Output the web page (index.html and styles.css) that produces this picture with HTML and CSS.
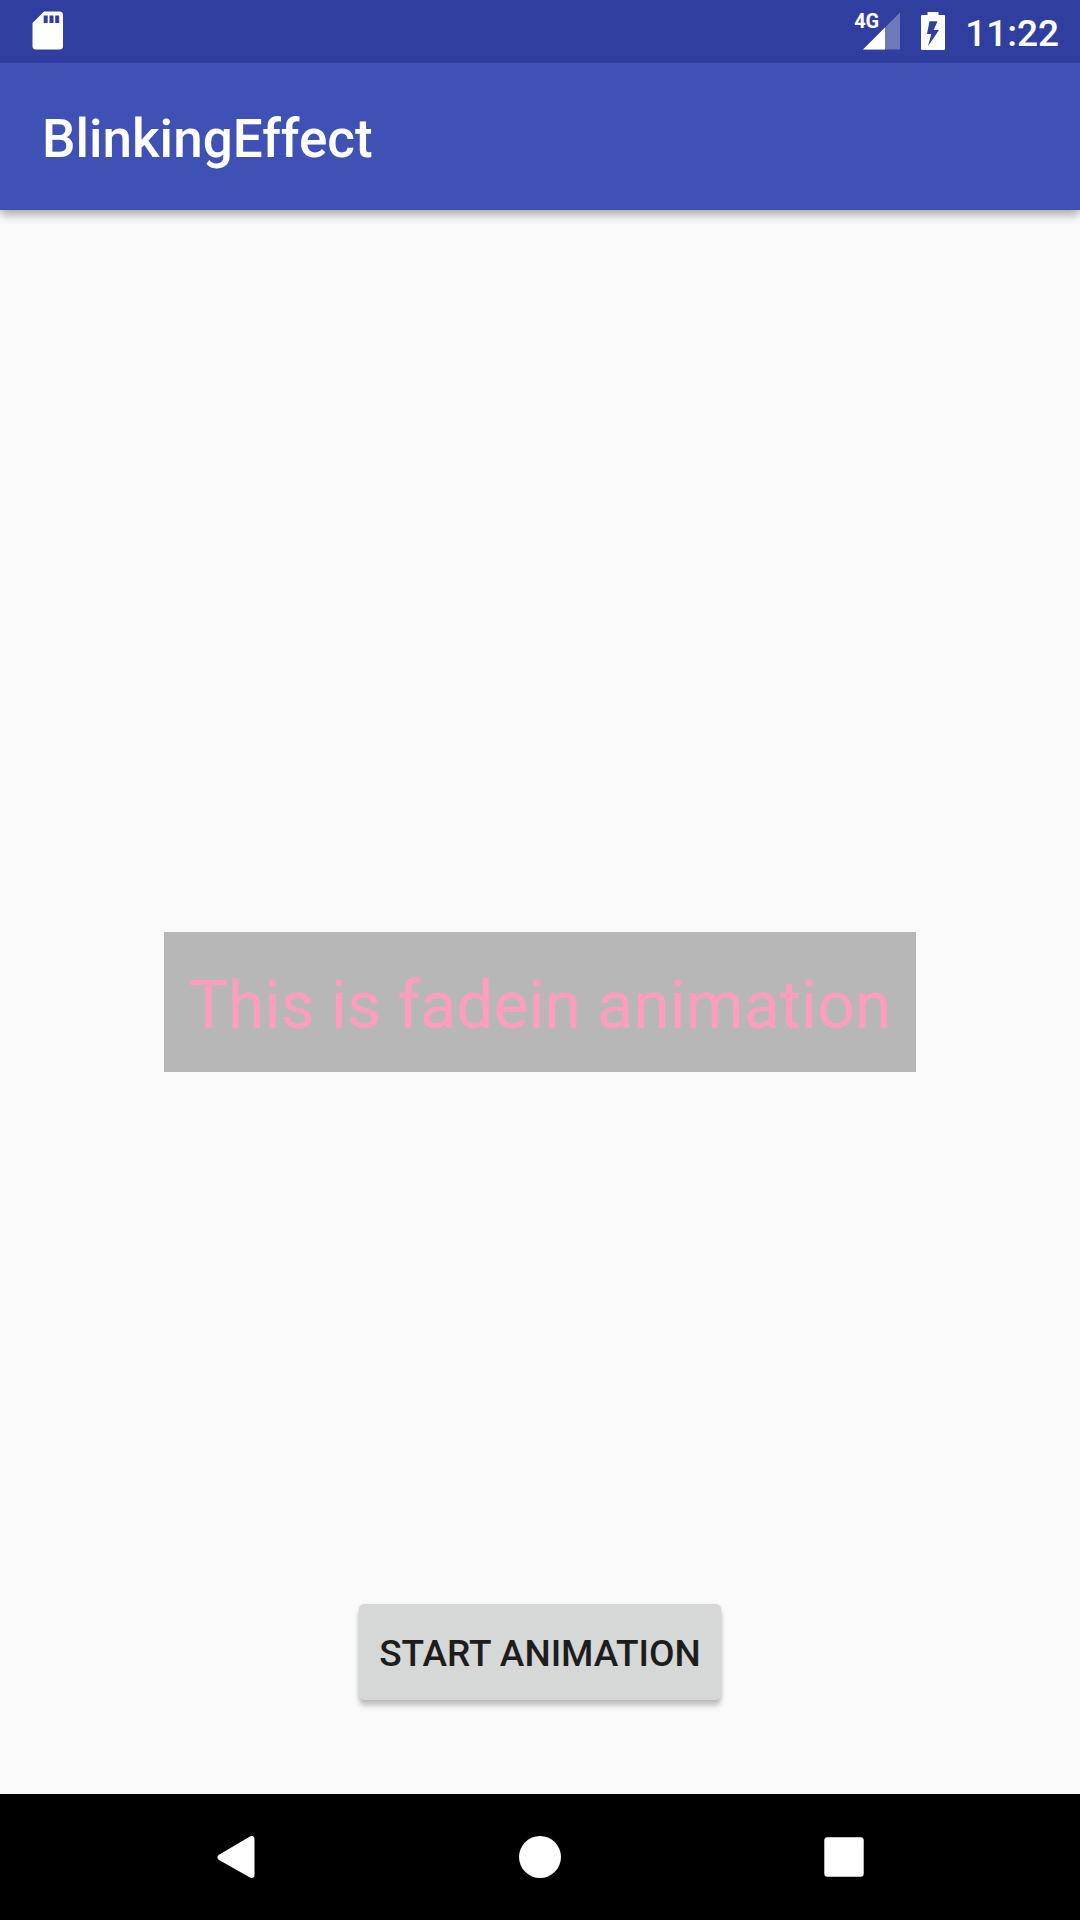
FILE: index.html
```html
<!DOCTYPE html>
<html lang="en">
<head>
<meta charset="utf-8">
<meta name="viewport" content="width=device-width, initial-scale=1">
<title>BlinkingEffect</title>
<link rel="stylesheet" href="styles.css">
</head>
<body class="screen">
  <div class="status-bar">
    <svg class="icon-sd" viewBox="0 0 32 40" aria-hidden="true">
      <path fill="#fff" fill-rule="evenodd" d="M12 .5h15.500a3.500 3.500 0 0 1 3.500 3.500v31a3.500 3.500 0 0 1-3.500 3.500H4a3.500 3.500 0 0 1-3.500-3.500V12zM11.700 4.500v7.500h4v-7.500zM17.500 4.500v7.500h4v-7.500zM23.200 4.500v7.500h4v-7.500z"/>
    </svg>
    <div class="status-right">
      <div class="signal">
        <svg class="icon-signal" viewBox="0 0 38 38" aria-hidden="true">
          <path fill="#fff" fill-opacity=".3" d="M0 37.500 37 .5v37z"/>
          <path fill="#fff" d="M0 37.500 22 15.500v22z"/>
        </svg>
        <span class="network">4G</span>
      </div>
      <svg class="icon-battery" viewBox="0 0 26 38" aria-hidden="true">
        <path fill="#fff" fill-rule="evenodd" d="M6.500 0h11v3h5.500q1 0 1 1v33q0 1-1 1H1q-1 0-1-1V4q0-1 1-1h5.500zM8.500 9.200 6 22h4.300L7 34.300 18 18h-5.300l3.800-8.800z"/>
      </svg>
      <time class="clock">11:22</time>
    </div>
  </div>
  <header class="app-bar">
    <h1 class="title">BlinkingEffect</h1>
  </header>
  <main class="content">
    <p class="message">This is fadein animation</p>
    <button class="start" type="button">START ANIMATION</button>
  </main>
  <nav class="nav-bar">
    <button class="nav-button" type="button" aria-label="Back">
      <svg class="nav-icon" viewBox="0 0 42 42" aria-hidden="true"><path fill="#fff" stroke="#fff" stroke-width="6" stroke-linejoin="round" d="M5.500 21.300 36.500 3v36z"/></svg>
    </button>
    <button class="nav-button" type="button" aria-label="Home">
      <svg class="nav-icon" viewBox="0 0 42 42" aria-hidden="true"><circle cx="21" cy="21" r="21" fill="#fff"/></svg>
    </button>
    <button class="nav-button" type="button" aria-label="Recent apps">
      <svg class="nav-icon" viewBox="0 0 42 42" aria-hidden="true"><rect x="1.300" y="1.300" width="39.400" height="39.400" rx="3" fill="#fff"/></svg>
    </button>
  </nav>
</body>
</html>
```
FILE: styles.css
```css
* {
  box-sizing: border-box;
}

.screen {
  margin: 0;
  min-height: 100vh;
  display: flex;
  flex-direction: column;
  background: #fafafa;
  font-family: Roboto, sans-serif;
}

.screen svg {
  display: block;
}

.status-bar {
  position: relative;
  z-index: 1;
  display: flex;
  align-items: center;
  justify-content: space-between;
  height: 63px;
  padding: 0 21px 1px 32px;
  background: #303f9f;
  color: #fff;
}

.icon-sd {
  width: 32px;
  height: 40px;
}

.status-right {
  display: flex;
  align-items: center;
}

.signal {
  position: relative;
  margin-right: 20px;
}

.icon-signal {
  width: 38px;
  height: 38px;
}

.network {
  position: absolute;
  top: -1px;
  left: -9px;
  font-size: 20px;
  line-height: 20px;
  font-weight: 700;
}

.icon-battery {
  width: 26px;
  height: 38px;
  margin-right: 18px;
}

.clock {
  padding-top: 5px;
  font-size: 37px;
  line-height: 44px;
  font-weight: 500;
}

.app-bar {
  position: relative;
  display: flex;
  align-items: center;
  height: 147px;
  padding: 4px 42px 0;
  background: #3f51b5;
  box-shadow: 0 4px 10px rgba(0, 0, 0, 0.36);
}

.title {
  margin: 0;
  color: #fff;
  font-size: 53px;
  line-height: 62px;
  font-weight: 500;
}

.content {
  flex: 1;
  display: grid;
  grid-template-rows: 1fr auto 1fr;
  justify-items: center;
}

.message {
  grid-row: 2;
  margin: 0;
  padding: 30px 25px 22px;
  background: #b7b7b7;
  color: #ff9dbe;
  font-size: 66px;
  line-height: 88px;
}

.start {
  grid-row: 3;
  align-self: end;
  height: 96px;
  margin: 0 0 94px;
  padding: 3px 20px 0;
  border: 0;
  border-radius: 5px;
  background: #d6d7d7;
  box-shadow: 0 6px 5px rgba(0, 0, 0, 0.2), 0 1px 4px rgba(0, 0, 0, 0.1);
  color: #1d1d1d;
  font-family: inherit;
  font-size: 37px;
  line-height: 44px;
  font-weight: 500;
}

.nav-bar {
  display: grid;
  grid-template-columns: repeat(3, 1fr);
  height: 126px;
  padding: 0 84px;
  background: #000;
}

.nav-button {
  display: flex;
  align-items: center;
  justify-content: center;
  padding: 0;
  border: 0;
  background: none;
}

.nav-icon {
  width: 42px;
  height: 42px;
}
```
